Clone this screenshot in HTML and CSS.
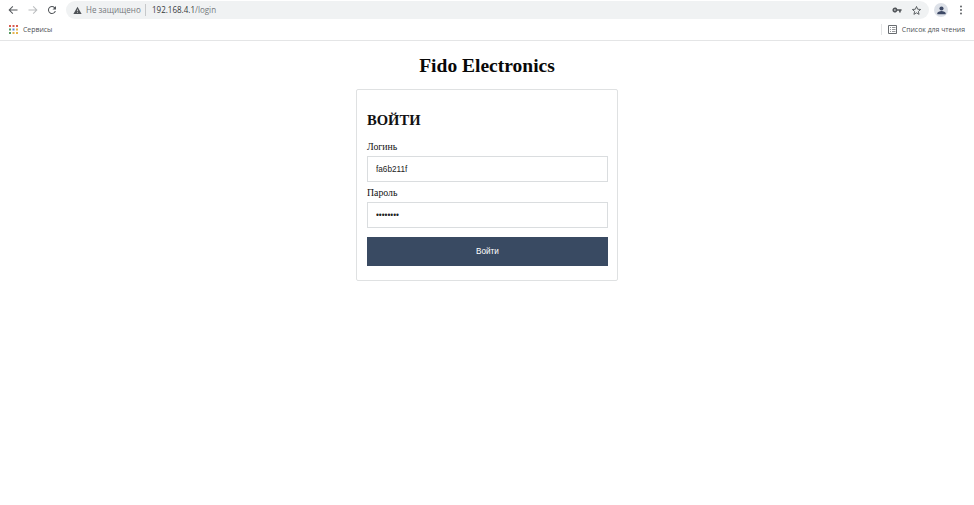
FILE: index.html
```html
<!DOCTYPE html>
<html lang="ru">
<head>
<meta charset="utf-8">
<title>Fido Electronics</title>
<link rel="stylesheet" href="styles.css">
</head>
<body>
<header class="browser">
  <div class="toolbar">
    <nav class="nav">
      <svg class="icon" viewBox="0 0 24 24"><path d="M21 11H6.8l5.6-5.6L11 4l-8 8 8 8 1.4-1.4L6.8 13H21z"/></svg>
      <svg class="icon muted" viewBox="0 0 24 24"><path d="M3 11h14.2l-5.6-5.6L13 4l8 8-8 8-1.4-1.4 5.6-5.6H3z"/></svg>
      <svg class="icon" viewBox="0 0 24 24"><path d="M17.65 6.35A8 8 0 1 0 19.73 14h-2.08A6 6 0 1 1 12 6c1.66 0 3.14.69 4.22 1.78L13 11h7V4z"/></svg>
    </nav>
    <div class="address">
      <svg class="warning" viewBox="0 0 24 24"><path fill-rule="evenodd" d="M1 21h22L12 2zM11 9h2v5h-2zm0 7h2v2h-2z"/></svg>
      <span class="security">Не защищено</span>
      <span class="url">192.168.4.1<span class="path">/login</span></span>
      <svg class="key" viewBox="0 0 24 24"><path fill-rule="evenodd" d="M12.7 10A6 6 0 1 0 12.7 14H17v4h4v-4h2v-4zM7 14a2 2 0 1 1 0-4 2 2 0 0 1 0 4z"/></svg>
      <svg class="star" viewBox="0 0 24 24"><path d="M12 3.2l2.5 6 6.5.6-4.9 4.3 1.5 6.3-5.6-3.3-5.6 3.3 1.5-6.3L3 9.8l6.5-.6z"/></svg>
    </div>
    <span class="avatar"><svg viewBox="0 0 24 24"><circle cx="12" cy="7.5" r="4.5"/><path d="M3 20v-2c0-3 5-5 9-5s9 2 9 5v2z"/></svg></span>
    <svg class="more" viewBox="0 0 4 12"><circle cx="2" cy="2.5" r=".9"/><circle cx="2" cy="6" r=".9"/><circle cx="2" cy="9.5" r=".9"/></svg>
  </div>
  <div class="bookmarks">
    <svg class="apps" viewBox="0 0 9 9"><path fill="#d95b50" d="M0 0h2v2H0zM3.5 0h2v2h-2zM7 0h2v2H7z"/><path fill="#579b61" d="M0 3.5h2v2H0z"/><path fill="#5485d6" d="M3.5 3.5h2v2h-2z"/><path fill="#e3b34d" d="M7 3.5h2v2H7zM3.5 7h2v2h-2zM7 7h2v2H7z"/><path fill="#579b61" d="M0 7h2v2H0z"/></svg>
    <span class="services">Сервисы</span>
    <span class="reading"><svg viewBox="0 0 9 9"><path class="frame" d="M.5.5h8v8h-8z"/><path class="rows" d="M2 2.5h1M4 2.5h3.5M2 4.5h1M4 4.5h3.5M2 6.5h1M4 6.5h3.5"/></svg><span class="reading-text">Список для чтения</span></span>
  </div>
</header>
<main>
  <h1>Fido Electronics</h1>
  <form class="card">
    <h2>ВОЙТИ</h2>
    <label for="login">Логинь</label>
    <input id="login" type="text" value="fa6b211f">
    <label for="password">Пароль</label>
    <input id="password" type="password" value="password">
    <button type="button">Войти</button>
  </form>
</main>
</body>
</html>
```

FILE: styles.css
```css
* { box-sizing: border-box; }
body { margin: 0; background: #fff; color: #111; font-family: "Liberation Serif", serif; }
svg { display: block; flex: none; }

.browser { height: 41px; border-bottom: 1px solid #e4e5e6; font-family: "Open Sans", sans-serif; color: #4e5256; }
.toolbar { display: flex; align-items: center; height: 20px; padding: 0 11px 0 7px; }
.nav { display: flex; gap: 7.5px; }
.icon { width: 12px; height: 12px; fill: #505458; }
.muted { fill: #b9bbbd; }
.address { display: flex; align-items: center; flex: 1; height: 18px; margin: 0 5px 0 8px; padding: 0 7px; border-radius: 9px; background: #f0f2f3; font-size: 8.02px; line-height: 12px; white-space: nowrap; }
.warning { width: 9px; height: 9px; fill: #505458; }
.security { width: 60px; margin-left: 4px; border-right: 1px solid #c6c8ca; color: #75797d; }
.url { margin-left: 6px; color: #36393c; }
.path { color: #75797d; }
.key { width: 10px; height: 10px; margin-left: auto; fill: #505458; }
.star { width: 11px; height: 11px; margin-left: 9px; fill: none; stroke: #505458; stroke-width: 2; }
.avatar { display: grid; place-items: center; width: 14px; height: 14px; border-radius: 50%; background: #dde1e8; }
.avatar svg { width: 11px; height: 11px; fill: #3d4965; }
.more { width: 4px; height: 12px; margin-left: 11px; fill: #505458; }

.bookmarks { display: flex; align-items: center; height: 19px; padding: 0 9px; font-size: 6.9px; line-height: 10px; white-space: nowrap; }
.apps { width: 9px; height: 9px; }
.services { margin-left: 5px; }
.reading { display: flex; align-items: center; height: 11px; margin-left: auto; padding-left: 6px; border-left: 1px solid #e3e4e5; }
.reading svg { width: 9px; height: 9px; fill: none; stroke: #686c70; }
.rows { stroke-width: .7; }
.reading-text { margin-left: 5px; }

main { width: 262px; margin: 0 auto; }
h1 { margin: 13px 0 12px; font-size: 19.5px; line-height: 23px; text-align: center; color: #080808; }
.card { height: 192px; padding: 22px 9px 0 10px; border: 1px solid #dfe1e2; border-radius: 2px; }
h2 { margin: 0 0 10px; font-size: 14.6px; line-height: 17px; }
label { display: block; height: 17px; font-size: 9.8px; line-height: 16px; }
input { display: block; width: 100%; height: 26px; margin: 0 0 3px; padding: 0 8px; border: 1px solid #dadddf; border-radius: 0; background: #fff; color: #222; font: 8.2px "Liberation Sans", sans-serif; }
button { display: block; width: 100%; height: 29px; margin-top: 9px; padding: 0; border: 0; background: #394a62; color: #fff; font: 8.2px "Liberation Sans", sans-serif; }
```
